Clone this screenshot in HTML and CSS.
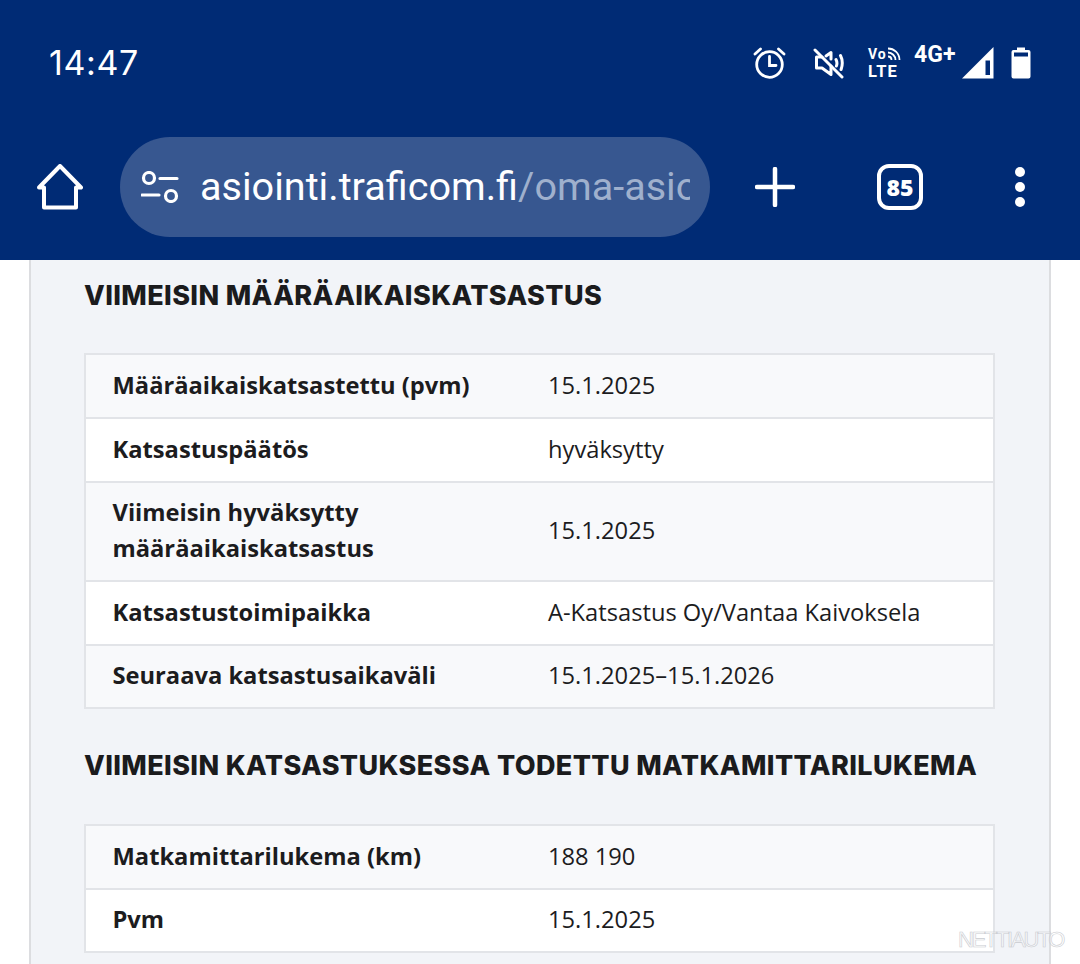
FILE: index.html
```html
<!DOCTYPE html>
<html lang="fi">
<head>
<meta charset="utf-8">
<title>Traficom</title>
<link rel="stylesheet" href="styles.css">
</head>
<body>
<header class="chrome">
  <div class="status">
    <span class="time">14:47</span>
    <div class="status-icons">
      <svg class="ic-alarm" viewBox="0 0 34 34" width="34" height="34" fill="none" stroke="#fff" stroke-width="2.8" stroke-linecap="round"><circle cx="17.500" cy="18.500" r="12.800"/><path d="M17.500 10.500V19.500H24"/><path d="M3 8 8.500 3M32 8 26.500 3"/></svg>
      <svg class="ic-mute" viewBox="0 0 32 32" width="32" height="32" fill="none" stroke="#fff" stroke-width="3" stroke-linecap="round" stroke-linejoin="round"><path d="M2 3 29 30"/><path d="M9 10H3.500V21H9L18 27.500V19M18 12V5.500L13 9"/><path d="M23 12.500c1 2 1 5 .4 6.500M27.500 8.500c2 4 2 10 .6 14"/></svg>
      <div class="volte">
        <div class="vo-row"><span class="vo">Vo</span><svg viewBox="0 0 14 14" width="14" height="14" fill="none" stroke="#fff" stroke-width="1.800"><path d="M1 1.500C7 1.500 12.500 6 12.500 13M1 5.500C5 5.500 8.500 9 8.500 13M1 9.500C3 9.500 4.500 11 4.500 13"/></svg></div>
        <span class="lte">LTE</span>
      </div>
      <span class="net">4G+</span>
      <svg class="ic-signal" viewBox="0 0 32 32" width="32" height="32"><path d="M0 31.500 31.500 0V31.500Z" fill="#fff"/><path d="M23.500 13.500H28V28H23.500Z" fill="#002b75"/></svg>
      <svg class="ic-batt" viewBox="0 0 20 32" width="20" height="32"><path fill="#fff" d="M6 .5H14V3H17.500A2 2 0 0 1 19.500 5V29.500A2 2 0 0 1 17.500 31.500H2.500A2 2 0 0 1 .5 29.500V5A2 2 0 0 1 2.500 3H6Z"/><rect x="3" y="5.500" width="14" height="4" fill="#002b75"/></svg>
    </div>
  </div>
  <div class="toolbar">
    <svg class="ic-home" viewBox="0 0 46 46" width="46" height="46" fill="none" stroke="#fff" stroke-width="4" stroke-linejoin="round" stroke-linecap="round"><path d="M2 23.500 23 2 44 23.500H39V43.500H7V23.500Z"/></svg>
    <div class="omnibox">
      <svg class="ic-tune" viewBox="0 0 38 32" width="38" height="32" fill="none" stroke="#fff" stroke-width="3.200"><circle cx="8" cy="7" r="5.500"/><path d="M19 7.500H36M1 24H18" stroke-linecap="round"/><circle cx="30" cy="25" r="5.500"/></svg>
      <div class="url"><span class="host">asiointi.traficom.fi</span><span class="path">/oma-asioi</span></div>
    </div>
    <svg class="ic-plus" viewBox="0 0 40 40" width="40" height="40" stroke="#fff" stroke-width="4.500" stroke-linecap="round"><path d="M2 20H38M20 2V38"/></svg>
    <div class="tabs">85</div>
    <div class="menu"><i></i><i></i><i></i></div>
  </div>
</header>
<main class="page">
  <section class="card">
    <h2 class="title first">VIIMEISIN MÄÄRÄAIKAISKATSASTUS</h2>
    <div class="table">
      <div class="row"><div class="th">Määräaikaiskatsastettu (pvm)</div><div class="td">15.1.2025</div></div>
      <div class="row"><div class="th">Katsastuspäätös</div><div class="td">hyväksytty</div></div>
      <div class="row"><div class="th">Viimeisin hyväksytty<br>määräaikaiskatsastus</div><div class="td">15.1.2025</div></div>
      <div class="row"><div class="th">Katsastustoimipaikka</div><div class="td">A-Katsastus Oy/Vantaa Kaivoksela</div></div>
      <div class="row"><div class="th">Seuraava katsastusaikaväli</div><div class="td">15.1.2025–15.1.2026</div></div>
    </div>
    <h2 class="title">VIIMEISIN KATSASTUKSESSA TODETTU MATKAMITTARILUKEMA</h2>
    <div class="table">
      <div class="row"><div class="th">Matkamittarilukema (km)</div><div class="td">188 190</div></div>
      <div class="row"><div class="th">Pvm</div><div class="td">15.1.2025</div></div>
    </div>
  </section>
</main>
<div class="watermark">NETTIAUTO</div>
</body>
</html>
```
FILE: styles.css
```css
* { box-sizing: border-box; }
html, body { margin: 0; padding: 0; }
body {
  width: 1080px;
  height: 964px;
  overflow: hidden;
  background: #fff;
  font-family: "Open Sans", "Liberation Sans", sans-serif;
  color: #1c1c1e;
  position: relative;
}
.chrome {
  height: 260px;
  background: #002b75;
  color: #fff;
  display: flex;
  flex-direction: column;
}
.status {
  height: 124px;
  padding: 0 49px 0 49px;
  display: flex;
  justify-content: space-between;
  align-items: flex-start;
}
.time {
  margin-top: 42px;
  font-family: Inter, Roboto, sans-serif;
  font-size: 34px;
  letter-spacing: .6px;
  line-height: 42px;
  font-weight: 400;
}
.status-icons {
  display: flex;
  align-items: flex-start;
  margin-top: 46px;
}
.ic-alarm { margin-right: 27px; }
.ic-mute { margin-right: 23px; margin-top: 1px; }
.volte { width: 46px; margin-top: 1px; font-family: Roboto, sans-serif; font-weight: 700; line-height: 15px; }
.vo-row { display: flex; align-items: flex-start; height: 17px; }
.vo { font-size: 14px; letter-spacing: .8px; }
.vo-row svg { margin-left: 1px; }
.lte { display: block; font-size: 16.5px; letter-spacing: 1px; }
.net {
  font-family: Roboto, sans-serif;
  font-weight: 700;
  font-size: 23px;
  line-height: 20px;
  margin-right: 6px;
  margin-top: -1px;
}
.ic-signal { margin-right: 17.5px; margin-top: 1px; }
.ic-batt { margin-top: 1px; }
.toolbar {
  height: 100px;
  margin-top: 13px;
  position: relative;
  display: flex;
  align-items: center;
}
.ic-home { margin-left: 37px; margin-right: 37px; flex: none; }
.omnibox {
  width: 590px;
  height: 100px;
  flex: none;
  border-radius: 50px;
  background: #375790;
  display: flex;
  align-items: center;
  padding: 0 20px 0 21px;
}
.ic-tune { flex: none; margin-right: 21px; }
.url {
  flex: 1;
  overflow: hidden;
  white-space: nowrap;
  font-family: Roboto, sans-serif;
  font-size: 39.6px;
  line-height: 50px;
}
.path { color: #9fb0cd; }
.ic-plus { margin-left: 45px; flex: none; }
.tabs {
  width: 46px;
  height: 46px;
  margin-left: 82px;
  flex: none;
  border: 4px solid #fff;
  border-radius: 12px;
  display: flex;
  align-items: center;
  justify-content: center;
  font-family: "Open Sans", sans-serif;
  font-weight: 800;
  font-size: 23px;
}
.menu {
  margin-left: 92px;
  display: flex;
  flex-direction: column;
  gap: 5px;
}
.menu i {
  display: block;
  width: 10px;
  height: 10px;
  border-radius: 50%;
  background: #fff;
}
.page { padding: 0 29px; height: 704px; overflow: hidden; }
.card {
  background: #f2f4f8;
  border-left: 2px solid #dcdde0;
  border-right: 2px solid #dcdde0;
  padding: 0 54px 0 53px;
  height: 704px;
}
.title {
  margin: 0;
  font-family: Inter, "Open Sans", sans-serif;
  font-weight: 800;
  font-size: 27px;
  letter-spacing: .38px;
  line-height: 36px;
  color: #1b1b1d;
  padding: 39px 0 40px;
  white-space: nowrap;
}
.title.first { padding: 18px 0 39px; }
.table { border: 2px solid #e2e4e8; }
.row {
  display: flex;
  align-items: center;
  min-height: 64px;
  padding: 11px 0 14px 26.5px;
  background: #fff;
  border-bottom: 2px solid #e2e4e8;
  font-size: 23.7px;
  line-height: 36px;
}
.row:last-child { border-bottom: 0; min-height: 61px; }
.row:nth-child(odd) { background: #f8f9fb; }
.th { width: 435.5px; flex: none; font-weight: 700; }
.td { flex: 1; }
.watermark {
  position: absolute;
  left: 958px;
  top: 929px;
  font-family: "Liberation Sans", sans-serif;
  font-size: 22px;
  letter-spacing: -2.1px;
  line-height: 22px;
  color: rgba(255,255,255,.35);
  -webkit-text-stroke: .6px #c9cbd0;
}
```
